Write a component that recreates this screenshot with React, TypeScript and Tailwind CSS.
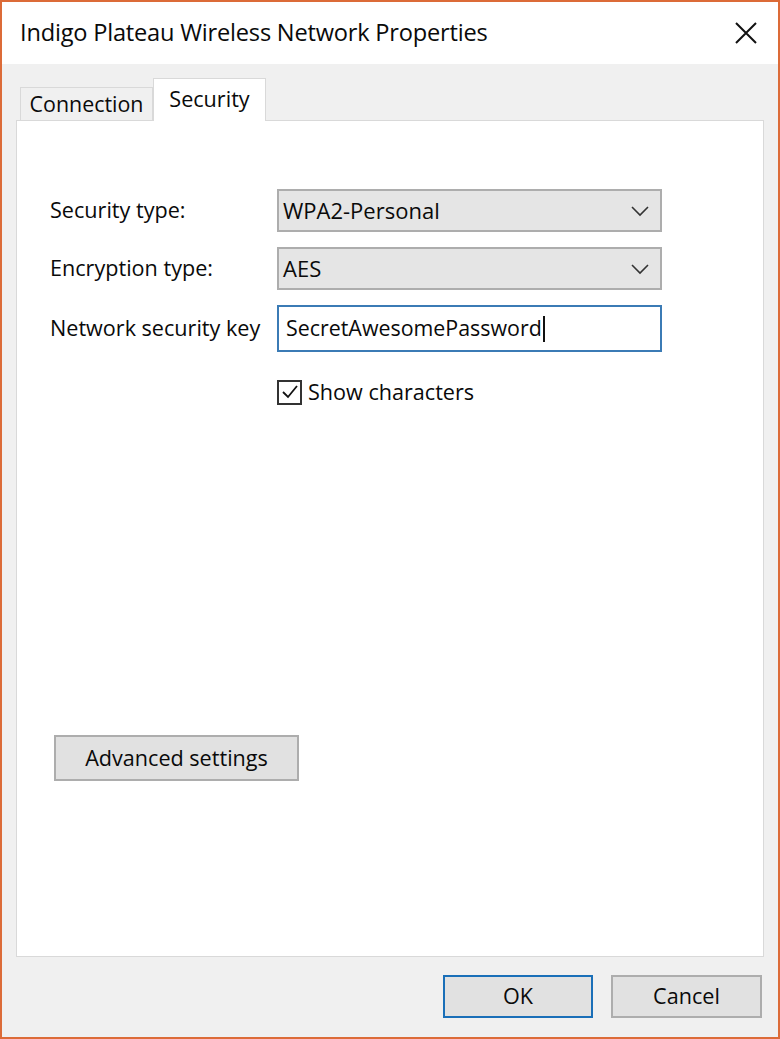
import React from 'react';

const font = { fontFamily: '"Open Sans", "Noto Sans", sans-serif' };

const Chevron: React.FC = () => (
    <svg width="20" height="12" viewBox="0 0 20 12" fill="none">
        <path d="M2 2 L10 10 L18 2" stroke="#333" strokeWidth="1.6" />
    </svg>
);

const Dropdown: React.FC<{ value: string }> = ({ value }) => (
    <div className="w-[385px] h-[43px] bg-[#e5e5e5] border-2 border-[#adadad] flex items-center justify-between pl-[4px] pr-[10px]">
        <span className="text-[22px]">{value}</span>
        <Chevron />
    </div>
);

const App: React.FC = () => {
    return (
        <div
            className="w-[780px] h-[1039px] border-2 border-[#dc6b38] bg-[#f0f0f0] flex flex-col text-[#0a0a0a]"
            style={font}
        >
            <div className="h-[62px] bg-white flex items-center justify-between pl-[18px] pr-[20px] shrink-0">
                <span className="text-[23.6px] tracking-[-0.2px]">
                    Indigo Plateau Wireless Network Properties
                </span>
                <svg width="24" height="24" viewBox="0 0 24 24" fill="none">
                    <path d="M2 2 L22 22 M22 2 L2 22" stroke="#111" strokeWidth="2" />
                </svg>
            </div>

            <div className="flex-1 flex flex-col px-[14px]">
                <div className="flex items-end pl-[4px] h-[56px] shrink-0">
                    <div className="h-[33px] w-[133px] bg-[#f0f0f0] border border-b-0 border-[#d9d9d9] flex items-center justify-center text-[21.4px]">
                        Connection
                    </div>
                    <div className="h-[43px] w-[113px] bg-white border border-b-0 border-[#d9d9d9] -mb-px relative z-10 flex items-start justify-center pt-[4px] text-[21.6px]">
                        Security
                    </div>
                </div>

                <div className="h-[837px] bg-white border border-[#d9d9d9] flex flex-col pl-[33px] pt-[68px]">
                    <div className="flex flex-col gap-[15px]">
                        <div className="flex items-center">
                            <span className="w-[227px] text-[21.6px]">Security type:</span>
                            <Dropdown value="WPA2-Personal" />
                        </div>
                        <div className="flex items-center">
                            <span className="w-[227px] text-[21.6px]">Encryption type:</span>
                            <Dropdown value="AES" />
                        </div>
                        <div className="flex items-center">
                            <span className="w-[227px] text-[21.6px]">Network security key</span>
                            <div className="w-[385px] h-[47px] bg-white border-2 border-[#3b7bb5] flex items-center pl-[7px]">
                                <span className="text-[21.4px]">SecretAwesomePassword</span>
                                <span className="w-[2px] h-[26px] bg-[#111] ml-[1px]" />
                            </div>
                        </div>
                    </div>

                    <div className="flex items-center ml-[227px] mt-[24px] gap-[6px]">
                        <div className="w-[25px] h-[25px] border-2 border-[#333] flex items-center justify-center">
                            <svg width="20" height="20" viewBox="0 0 20 20" fill="none">
                                <path d="M3 10 L8 15 L17 4" stroke="#111" strokeWidth="1.8" />
                            </svg>
                        </div>
                        <span className="text-[21.6px]">Show characters</span>
                    </div>

                    <div className="mt-auto mb-[175px] w-[245px] h-[46px] bg-[#e1e1e1] border-2 border-[#adadad] flex items-center justify-center text-[21.6px] ml-[4px]">
                        Advanced settings
                    </div>
                </div>

                <div className="flex justify-end gap-[18px] pt-[18px] pr-[2px]">
                    <div className="w-[150px] h-[43px] bg-[#e1e1e1] border-2 border-[#1a6fb8] flex items-center justify-center text-[21.6px]">
                        OK
                    </div>
                    <div className="w-[151px] h-[43px] bg-[#e1e1e1] border-2 border-[#adadad] flex items-center justify-center text-[21.6px]">
                        Cancel
                    </div>
                </div>
            </div>
        </div>
    );
};

export default App;
